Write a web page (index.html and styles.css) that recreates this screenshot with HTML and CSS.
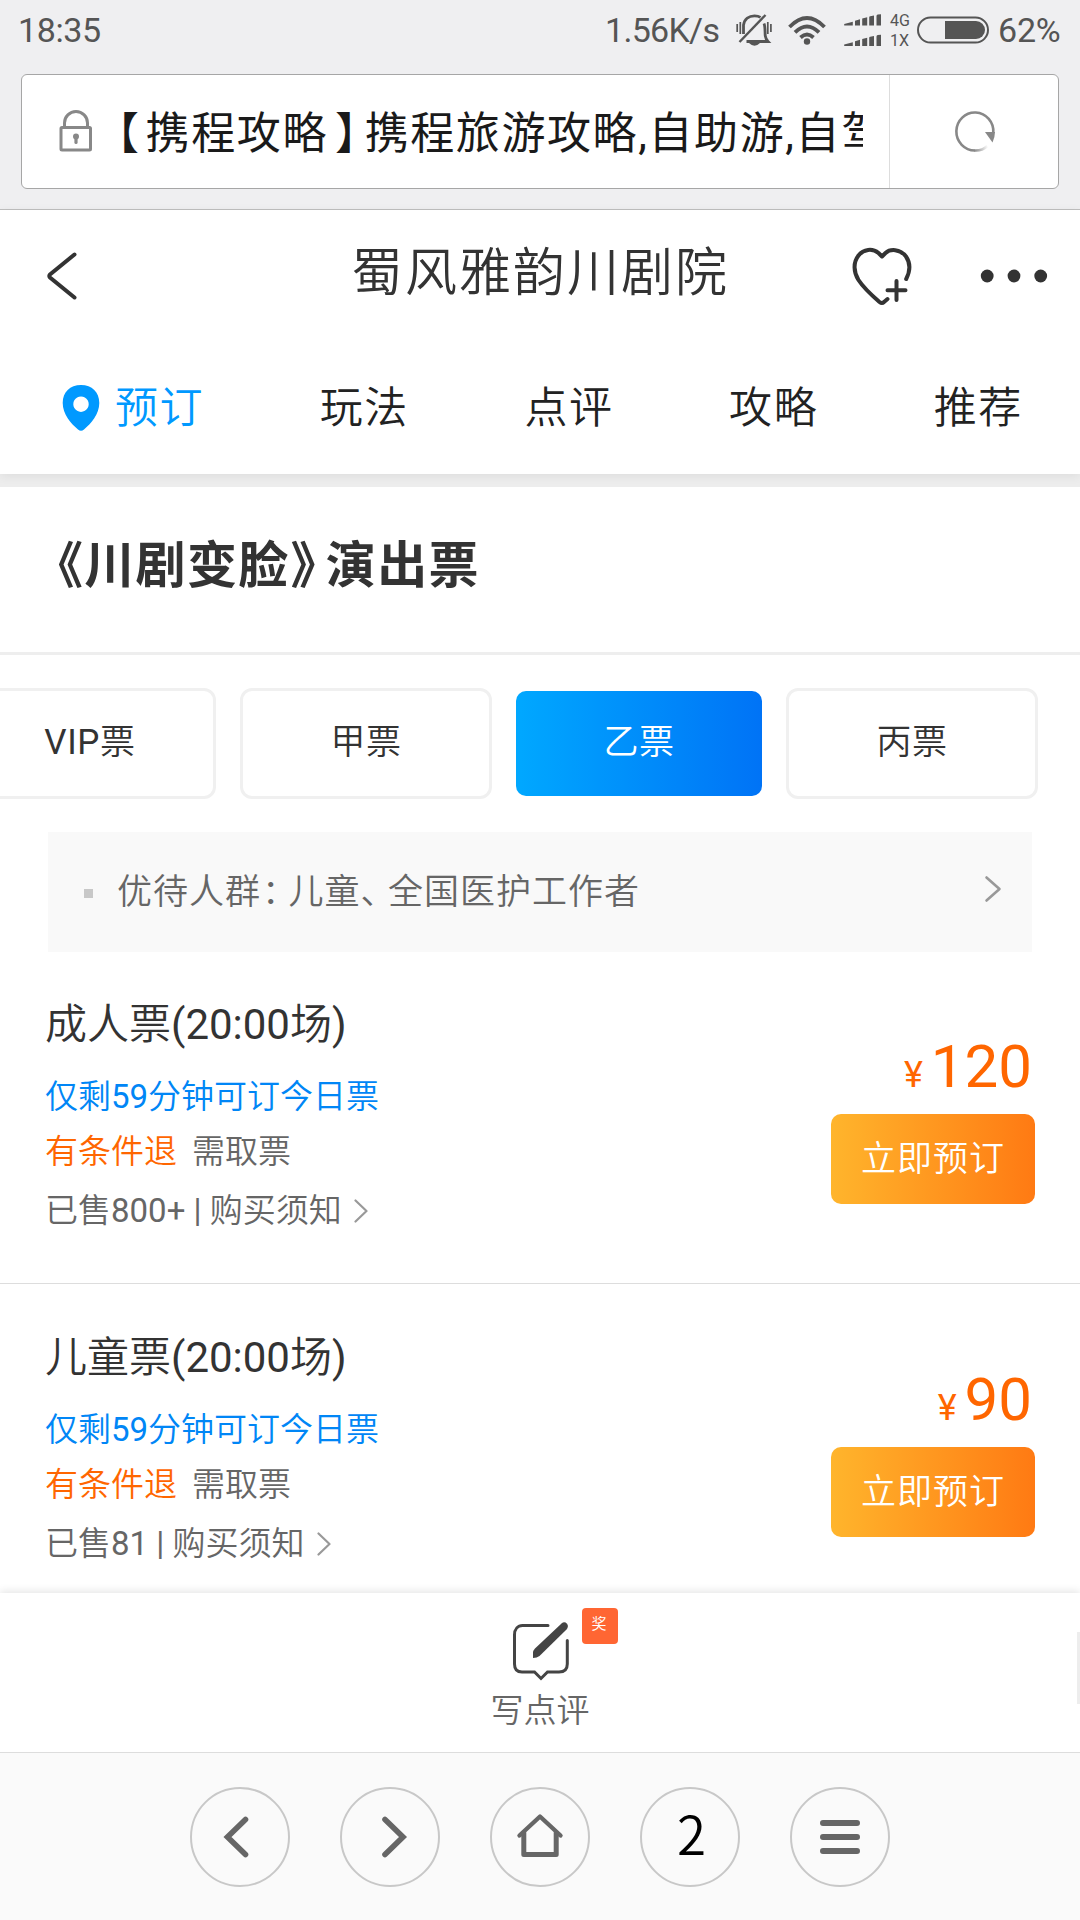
FILE: index.html
```html
<!DOCTYPE html>
<html lang="zh-CN">
<head>
<meta charset="utf-8">
<title>蜀风雅韵川剧院</title>
<link rel="stylesheet" href="styles.css">
</head>
<body>
<div class="screen">
  <div class="browser-top">
    <div class="status">
      <span class="clock">18:35</span>
      <span class="speed">1.56K/s</span>
      <svg class="bell" width="36" height="33" viewBox="0 0 36 33">
        <g fill="none" stroke="#555" stroke-width="2.4">
          <path d="M3.500 28L29.500 1"/>
          <path d="M7.500 20V11C8.500 5 13 1.800 18.500 1.800C21 1.800 23 2.300 24.500 3.400M28 9.500C29.500 13 28.800 19 29.300 22C29.800 25 31 26.500 32 27.500H10.500" stroke-width="2.800"/>
          <path d="M1.200 10v8M4.300 8v12M31.800 8v12M34.900 10v8" stroke-width="1.700"/>
        </g>
        <path d="M13 29h11q-5.500 5.500-11 0z" fill="#555"/>
      </svg>
      <svg class="wifi" width="38" height="29" viewBox="0 0 38 29">
        <g fill="none" stroke="#555" stroke-width="3.800">
          <path d="M1.500 11Q19-7 36.500 11"/>
          <path d="M7 16.300Q19 4.500 31 16.300"/>
          <path d="M12.500 21.500Q19 15.500 25.500 21.500"/>
        </g>
        <circle cx="19" cy="25.500" r="3.200" fill="#555"/>
      </svg>
      <svg class="signal" width="38" height="33" viewBox="0 0 38 33" fill="#555">
        <path id="bars" d="M.2 11.500V10l8.600-2.300v3.800zM11 11.500V6.800l5-1.500v6.200zM18.200 11.500V4.600l5-1.400v8.300zM25.200 11.500V3.300q0-1 1-1l3.800-.8v10zM32.500 11.500V2q0-1.300 1.300-1.500L37 .2v11.300z"/>
        <use href="#bars" y="20.500"/>
      </svg>
      <span class="net"><span>4G</span><span>1X</span></span>
      <svg class="battery" width="72" height="28" viewBox="0 0 72 28">
        <rect x="1" y="1.500" width="70" height="25" rx="12.500" fill="none" stroke="#555" stroke-width="2"/>
        <path d="M28 5H59a9 9 0 0 1 0 18H28z" fill="#555"/>
      </svg>
      <span class="percent">62%</span>
    </div>
    <div class="address">
      <div class="url">
        <svg class="lock" width="34" height="42" viewBox="0 0 34 42">
          <path d="M5.500 17V13a11.500 11.500 0 0 1 23 0V17" fill="none" stroke="#888" stroke-width="3"/>
          <rect x="2" y="17.500" width="29.500" height="22.500" rx="1" fill="none" stroke="#888" stroke-width="3"/>
          <circle cx="17" cy="26.500" r="3" fill="#888"/>
          <path d="M17 27v5.500" stroke="#888" stroke-width="3.200" stroke-linecap="round"/>
        </svg>
        <div class="url-text"><span class="half open">【</span>携程攻略<span class="half close">】</span>携程旅游攻略,自助游,自驾游</div>
      </div>
      <div class="reload">
        <svg width="42" height="44" viewBox="0 0 42 44">
          <defs><linearGradient id="fade" gradientUnits="userSpaceOnUse" x1="20" y1="40" x2="34" y2="36"><stop offset="0" stop-color="#888"/><stop offset="1" stop-color="#888" stop-opacity="0"/></linearGradient></defs>
          <path d="M21 40.500A18.500 19 0 1 1 39.300 23" fill="none" stroke="#888" stroke-width="2.600"/>
          <path d="M20.500 40.500Q28 41 33.500 36" fill="none" stroke="url(#fade)" stroke-width="2.600"/>
          <path d="M31 22h10q0 5-2.500 10.500z" fill="#888"/>
        </svg>
      </div>
    </div>
  </div>

  <header class="header">
    <div class="titlebar">
      <svg class="back" width="32" height="52" viewBox="0 0 32 52"><path d="M28.500 4.500L4 24.500q-1.500 1.500 0 3L28.500 47.500" fill="none" stroke="#333" stroke-width="4" stroke-linecap="round"/></svg>
      <h1>蜀风雅韵川剧院</h1>
      <svg class="heart" width="62" height="60" viewBox="0 0 62 60" fill="none" stroke="#333" stroke-width="4" stroke-linecap="round" stroke-linejoin="round">
        <path d="M55.200 32C59 24.500 59.500 16 55 9.500C49 1.500 39 1.800 34.500 6L31 9.500L27.500 6C21.500 1 12.500 2 7.500 8.500C2 15.500 2.500 25 7.500 33C13 41.500 21 48.500 28.500 55Q31 57 33 55L36.500 52"/>
        <path d="M45.500 34v19M36.500 43.200h18"/>
      </svg>
      <svg class="dots" width="68" height="14" viewBox="0 0 68 14" fill="#333"><circle cx="7.200" cy="7" r="6.400"/><circle cx="34" cy="7" r="6.400"/><circle cx="60.700" cy="7" r="6.400"/></svg>
    </div>
    <nav class="tabs">
      <a class="tab active"><svg width="38" height="46" viewBox="0 0 38 46"><path fill-rule="evenodd" d="M19 0C30 0 37.300 7 37.300 18C37.300 29 29 38.500 22 44.500Q19 47 16 44.500C9 38.500.7 29 .7 18C.7 7 8 0 19 0zM19 11.500a7.700 7.700 0 1 0 .01 0z" fill="#09f"/></svg>预订</a>
      <a class="tab">玩法</a>
      <a class="tab">点评</a>
      <a class="tab">攻略</a>
      <a class="tab">推荐</a>
    </nav>
  </header>
  <div class="divider"></div>

  <main class="content">
    <h2><span class="half open">《</span>川剧变脸<span class="half close">》</span>演出票</h2>
    <div class="chips">
      <span class="chip first">VIP票</span>
      <span class="chip">甲票</span>
      <span class="chip on">乙票</span>
      <span class="chip">丙票</span>
    </div>
    <div class="notice">
      <i class="bullet"></i>
      <p>优待人群<span class="half colon">：</span>儿童<span class="half comma">、</span>全国医护工作者</p>
      <svg width="18" height="28" viewBox="0 0 18 28"><path d="M2.500 2.500L15.500 14L2.500 25.500" fill="none" stroke="#999" stroke-width="2.600" stroke-linecap="round" stroke-linejoin="round"/></svg>
    </div>
    <section class="ticket">
      <div class="info">
        <h3>成人票(20:00场)</h3>
        <p class="remain">仅剩59分钟可订今日票</p>
        <p class="rules"><span class="refund">有条件退</span><span>需取票</span></p>
        <p class="sold">已售800+ | 购买须知<svg width="14" height="24" viewBox="0 0 14 24"><path d="M1.500 1.500L12.500 12L1.500 22.500" fill="none" stroke="#999" stroke-width="2.200" stroke-linecap="round" stroke-linejoin="round"/></svg></p>
      </div>
      <div class="buy">
        <p class="price"><small>¥</small>120</p>
        <a class="book">立即预订</a>
      </div>
    </section>
    <section class="ticket">
      <div class="info">
        <h3>儿童票(20:00场)</h3>
        <p class="remain">仅剩59分钟可订今日票</p>
        <p class="rules"><span class="refund">有条件退</span><span>需取票</span></p>
        <p class="sold">已售81 | 购买须知<svg width="14" height="24" viewBox="0 0 14 24"><path d="M1.500 1.500L12.500 12L1.500 22.500" fill="none" stroke="#999" stroke-width="2.200" stroke-linecap="round" stroke-linejoin="round"/></svg></p>
      </div>
      <div class="buy">
        <p class="price"><small>¥</small>90</p>
        <a class="book">立即预订</a>
      </div>
    </section>
  </main>

  <div class="review">
    <div class="pen">
      <svg width="60" height="62" viewBox="0 0 60 62">
        <path d="M37 5.500H11.500C7 5.500 3.500 9 3.500 15V44C3.500 49.500 6 52 11 52H23.500L30 58.500L36.500 52H48C53.500 52 56.300 49 56.300 44V20.500" fill="none" stroke="#444" stroke-width="3" stroke-linecap="round"/>
        <path d="M50.500 3.500Q53.500 1 56 3.800Q58 6.500 55.500 9.500L28.500 36Q26 38 22 38V32Q22 30.500 24 28.500z" fill="#444"/>
      </svg>
      <span class="badge">奖</span>
    </div>
    <span class="label">写点评</span>
    <i class="handle"></i>
  </div>

  <nav class="toolbar">
    <a class="round"><svg width="44" height="48" viewBox="0 0 44 48"><path d="M27.500 6.500L9.500 24L27.500 41.500" fill="none" stroke="#666" stroke-width="5.600" stroke-linecap="round"/></svg></a>
    <a class="round"><svg width="44" height="48" viewBox="0 0 44 48"><path d="M17 6.500L35 24L17 41.500" fill="none" stroke="#666" stroke-width="5.600" stroke-linecap="round"/></svg></a>
    <a class="round"><svg width="48" height="48" viewBox="0 0 48 48" fill="none" stroke="#666" stroke-linecap="round" stroke-linejoin="round"><path d="M3.500 22.500L24 3.500L44.500 22.500" stroke-width="4.400"/><path d="M7.800 20V41.500H40.200V20" stroke-width="5"/></svg></a>
    <a class="round count">2</a>
    <a class="round"><svg width="40" height="36" viewBox="0 0 40 36" stroke="#666" stroke-width="6" stroke-linecap="round"><path d="M3 4h34M3 18h34M3 32h34"/></svg></a>
  </nav>
</div>
</body>
</html>
```

FILE: styles.css
```css
* { box-sizing: border-box; margin: 0; padding: 0; }
body {
  width: 1080px;
  height: 1920px;
  overflow: hidden;
  background: #fff;
  color: #333;
  font-family: Roboto, "Noto Sans CJK SC DemiLight", "Noto Sans CJK SC", sans-serif;
  font-weight: 400;
}
svg { display: block; flex: none; }
h1, h2, h3 { font-weight: 400; }
.screen { display: flex; flex-direction: column; height: 1920px; }
.half { font-feature-settings: "halt"; }

/* Browser chrome */
.browser-top { flex: none; height: 210px; background: #efeff1; border-bottom: 1px solid #bfbfbf; }
.status { display: flex; align-items: center; height: 60px; padding: 0 18px; color: #555; font-size: 34px; font-weight: 400; white-space: nowrap; }
.clock { letter-spacing: -.4px; width: 587px; }
.speed { width: 115px; letter-spacing: -.7px; }
.bell { margin-left: 16px; }
.wifi { margin-left: 16px; }
.signal { margin-left: 18px; }
.net { display: flex; flex-direction: column; width: 27px; margin-left: 8px; font-size: 16px; line-height: 20px; padding-top: 1px; }
.percent { margin-left: 9px; letter-spacing: -.2px; }
.address { display: flex; width: 1038px; height: 115px; margin: 14px 0 0 21px; background: #fff; border: 1px solid #a6a6a6; border-radius: 6px; }
.url { display: flex; align-items: center; flex: 1; padding-left: 37px; border-right: 1px solid #ddd; }
.lock { margin-top: -1px; }
.url-text { width: 754px; margin-left: 16px; padding-top: 4px; overflow: hidden; white-space: nowrap; color: #1a1a1a; font-family: Roboto, "Noto Sans CJK SC", sans-serif; font-size: 44px; line-height: 70px; letter-spacing: 1.6px; }
.url-text .open { margin: 0 5px 0 8px; }
.url-text .close { margin: 0 6px 0 7px; }
.reload { display: flex; align-items: center; justify-content: center; width: 168px; padding: 1px 0 0 2px; }

/* Page header */
.header { flex: none; height: 264px; background: #fff; box-shadow: 0 2px 10px rgba(0, 0, 0, .07); z-index: 1; }
.titlebar { display: flex; align-items: center; height: 132px; padding-left: 46px; }
h1 { width: 730px; margin-left: 44px; padding-left: 229px; font-size: 52px; letter-spacing: 2px; line-height: 70px; margin-top: -4px; }
.heart { margin-left: -1px; margin-top: 2px; }
.dots { margin-left: 67px; }
.tabs { display: flex; justify-content: space-between; padding: 0 57px 0 62px; height: 132px; align-items: center; color: #222; font-size: 43px; letter-spacing: 1.6px; }
.tab { display: flex; align-items: center; line-height: 60px; }
.tab.active { color: #09f; gap: 15px; }
.tab svg { margin-top: -1px; }
.divider { flex: none; height: 13px; background: #ededed; }

/* Ticket classes */
.content { flex: 1; min-height: 0; overflow: hidden; }
h2 { height: 168px; padding: 49px 0 0 58px; border-bottom: 3px solid #eee; font-family: Roboto, "Noto Sans CJK SC", sans-serif; font-size: 50px; line-height: 60px; letter-spacing: 1.3px; font-weight: 700; white-space: nowrap; }
h2 .close { margin: 0 9px 0 1px; }
.chips { display: flex; align-items: center; gap: 24px; height: 111px; margin: 33px 0 0 -36px; }
.chip { width: 252px; height: 111px; border: 3px solid #f0f0f0; border-radius: 12px; text-align: center; font-size: 35px; letter-spacing: .6px; line-height: 103px; }
.chip.on { width: 246px; height: 105px; border: 0; border-radius: 10px; color: #fff; background: linear-gradient(90deg, #00a8ff, #0073f6); line-height: 103px; }
.notice { display: flex; align-items: center; height: 120px; margin: 33px 48px 0; padding: 0 30px 0 36px; background: #f9f9f9; color: #666; }
.bullet { width: 9px; height: 9px; background: #c8c8c8; margin-top: 3px; }
.notice p { flex: 1; margin-left: 24px; padding-top: 2px; font-size: 35px; letter-spacing: 1px; line-height: 50px; }
.notice svg { margin-top: -6px; }
.colon { margin: 0 8px 0 1px; }
.comma { margin-right: 9px; }

/* Ticket rows */
.ticket { display: flex; justify-content: space-between; height: 331px; padding: 43px 45px 0 45px; }
.ticket + .ticket { height: 333px; border-top: 1px solid #ddd; padding-top: 44px; }
h3 { font-size: 42px; line-height: 60px; }
.info p { font-size: 33px; line-height: 54px; }
.info .remain { margin-top: 15px; color: #0086f6; }
.info .rules { display: flex; gap: 15px; margin-top: 1px; color: #666; }
.refund { color: #f60; }
.info .sold { display: flex; align-items: center; margin-top: 5px; color: #666; }
.sold svg { margin-left: 12px; }
.buy { width: 204px; padding-top: 42px; }
.price { display: flex; justify-content: flex-end; align-items: baseline; height: 60px; padding-right: 3px; color: #f60; font-size: 60px; line-height: 60px; }
.price small { font-size: 36px; line-height: 36px; margin-right: 8px; }
.book { display: block; height: 90px; margin-top: 17px; border-radius: 10px; background: linear-gradient(90deg, #ffb52c, #ff7a13); color: #fff; font-size: 35px; line-height: 91px; letter-spacing: 1px; text-align: center; }

/* Review bar */
.review { position: relative; flex: none; display: flex; flex-direction: column; align-items: center; height: 159px; background: #fff; box-shadow: 0 -2px 8px rgba(0, 0, 0, .1); }
.pen { position: relative; margin: 27px 0 0 2px; }
.badge { position: absolute; left: 71px; top: -12px; width: 36px; height: 36px; border-radius: 4px; background: #ff6633; color: #fff; font-size: 15px; line-height: 33px; text-align: center; padding-right: 2px; }
.label { margin-top: 2px; color: #666; font-size: 33px; line-height: 54px; }
.handle { position: absolute; right: 0; top: 39px; width: 3px; height: 72px; background: #ededed; }

/* Browser toolbar */
.toolbar { flex: none; display: flex; justify-content: center; align-items: center; gap: 50px; height: 168px; background: #fafafa; border-top: 1px solid #ddd; z-index: 1; }
.round { display: flex; align-items: center; justify-content: center; width: 100px; height: 100px; border: 2px solid #c8c8c8; border-radius: 50%; color: #000; }
.count { font: 400 53px/90px "Noto Sans CJK SC DemiLight", "Noto Sans CJK SC", sans-serif; padding: 0 0 9px 3px; }
```
